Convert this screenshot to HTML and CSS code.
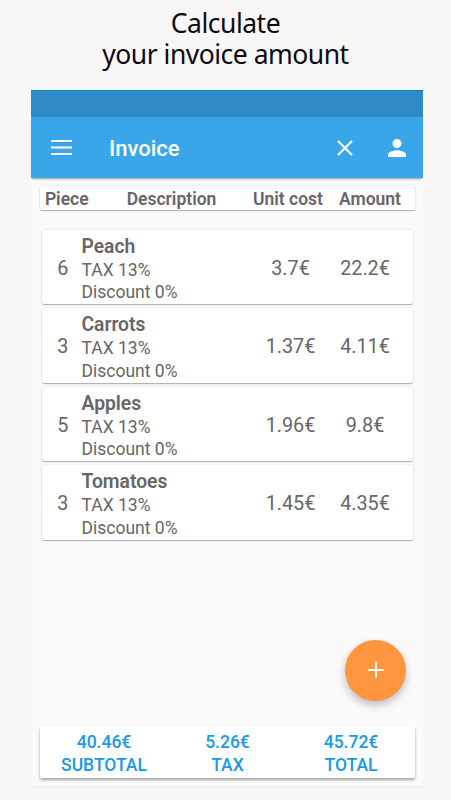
FILE: index.html
```
<!DOCTYPE html>
<html lang="en">
  <head>
    <meta charset="UTF-8" />
    <meta name="viewport" content="width=device-width, initial-scale=1.0" />
    <title>Invoice</title>
    <link rel="stylesheet" href="styles.css">
  </head>
  <body>
    <h1 class="headline">Calculate<br>your invoice amount</h1>

    <main class="phone">
      <div class="status_bar"></div>
      <header class="toolbar">
        <svg class="icon menu" viewBox="0 0 21 15">
          <path d="M0 1h21M0 7.5h21M0 14h21" />
        </svg>
        <h2>Invoice</h2>
        <svg class="icon close" viewBox="0 0 16 16">
          <path d="M1 1l14 14M15 1L1 15" />
        </svg>
        <svg class="icon user" viewBox="4 4 16 16">
          <path d="M12 12c2.21 0 4-1.79 4-4s-1.79-4-4-4-4 1.79-4 4 1.79 4 4 4zm0 2c-2.67 0-8 1.34-8 4v2h16v-2c0-2.66-5.33-4-8-4z" />
        </svg>
      </header>

      <div class="table_head">
        <span>Piece</span>
        <span>Description</span>
        <span>Unit cost</span>
        <span>Amount</span>
      </div>

      <ul class="item_list">
        <li>
          <span class="piece">6</span>
          <div class="desc">
            <h3>Peach</h3>
            <p>TAX 13%</p>
            <p>Discount 0%</p>
          </div>
          <span class="cost">3.7€</span>
          <span class="amount">22.2€</span>
        </li>
        <li>
          <span class="piece">3</span>
          <div class="desc">
            <h3>Carrots</h3>
            <p>TAX 13%</p>
            <p>Discount 0%</p>
          </div>
          <span class="cost">1.37€</span>
          <span class="amount">4.11€</span>
        </li>
        <li>
          <span class="piece">5</span>
          <div class="desc">
            <h3>Apples</h3>
            <p>TAX 13%</p>
            <p>Discount 0%</p>
          </div>
          <span class="cost">1.96€</span>
          <span class="amount">9.8€</span>
        </li>
        <li>
          <span class="piece">3</span>
          <div class="desc">
            <h3>Tomatoes</h3>
            <p>TAX 13%</p>
            <p>Discount 0%</p>
          </div>
          <span class="cost">1.45€</span>
          <span class="amount">4.35€</span>
        </li>
      </ul>

      <button class="add_btn" aria-label="Add">
        <svg viewBox="0 0 16 16">
          <path d="M8 0v16M0 8h16" />
        </svg>
      </button>

      <footer class="totals">
        <div>40.46€<br>SUBTOTAL</div>
        <div>5.26€<br>TAX</div>
        <div>45.72€<br>TOTAL</div>
      </footer>
    </main>
  </body>
</html>
```
FILE: styles.css
```
* {
  box-sizing: border-box;
}
body {
  margin: 0;
  height: 800px;
  overflow: hidden;
  background-color: #f8f7f5;
  font-family: Roboto, sans-serif;
  color: #666;
}
h1,
h2,
h3,
p,
ul {
  margin: 0;
  padding: 0;
}
.headline {
  height: 90px;
  padding-top: 8px;
  font: 400 26.5px/30.5px "Noto Sans", sans-serif;
  letter-spacing: -0.5px;
  color: #0b0b16;
  text-align: center;
}
.phone {
  position: relative;
  display: flex;
  flex-direction: column;
  width: 392px;
  height: 697px;
  margin-left: 31px;
  padding-bottom: 8px;
  background-color: #fafafa;
  border-bottom: 1px solid #f0f0f0;
}
.status_bar {
  height: 27px;
  background-color: #2e8bc5;
  border-top: 1px solid #0e83c4;
}
.toolbar {
  display: flex;
  align-items: center;
  height: 61px;
  padding: 0 17px 0 20px;
  background-color: #3aa6ea;
  box-shadow: 0 2px 2px -1px rgba(0, 0, 0, 0.4);
  color: #fff;
}
.toolbar h2 {
  flex-grow: 1;
  margin-left: 37px;
  padding-top: 2px;
  font-size: 22px;
  font-weight: 500;
}
.icon {
  fill: none;
  stroke: #fff;
  stroke-width: 2;
}
.menu {
  width: 21px;
  height: 15px;
}
.close {
  width: 16px;
  height: 16px;
}
.user {
  width: 18px;
  height: 18px;
  margin-left: 35px;
  fill: #fff;
  stroke: none;
}
.table_head,
.item_list li,
.totals {
  background-color: #fff;
  border-radius: 2px;
  box-shadow: 0 0 2px rgba(0, 0, 0, 0.15), 0 1px 1px rgba(0, 0, 0, 0.28);
}
.table_head {
  display: grid;
  grid-template-columns: 53.5px 156px 77px 87px;
  align-items: center;
  justify-items: center;
  height: 24px;
  margin: 8px 8px 0 9px;
  padding-top: 2px;
  font-size: 17.5px;
  font-weight: 600;
  white-space: nowrap;
}
.item_list {
  display: grid;
  gap: 4px;
  margin: 19.5px 10px 0 11px;
  list-style: none;
}
.item_list li {
  display: grid;
  grid-template-columns: 39.5px 169px 80px 69px;
  align-items: center;
  height: 74.5px;
  font-size: 19.8px;
}
.piece {
  padding-left: 2px;
}
.piece,
.cost,
.amount {
  padding-top: 3px;
  text-align: center;
}
.desc {
  padding-top: 5px;
  font-size: 17.5px;
  line-height: 22.3px;
}
.desc h3 {
  font-size: 19.3px;
  font-weight: 600;
  line-height: 24px;
}
.add_btn {
  position: absolute;
  right: 17px;
  bottom: 85.5px;
  display: grid;
  place-items: center;
  width: 61px;
  height: 61px;
  padding: 0;
  border: none;
  border-radius: 50%;
  background-color: #ff963f;
  box-shadow: 0 4px 8px rgba(0, 0, 0, 0.25);
}
.add_btn svg {
  width: 16px;
  height: 16px;
  stroke: #fff;
  stroke-width: 2;
}
.totals {
  display: grid;
  grid-template-columns: 128px 119px 128px;
  height: 52px;
  margin: auto 8px 0 9px;
  padding-top: 4.5px;
  box-shadow: 0 2px 3px rgba(0, 0, 0, 0.35);
  font-size: 17.5px;
  font-weight: 500;
  line-height: 23.5px;
  color: #189ae6;
  text-align: center;
}
```
